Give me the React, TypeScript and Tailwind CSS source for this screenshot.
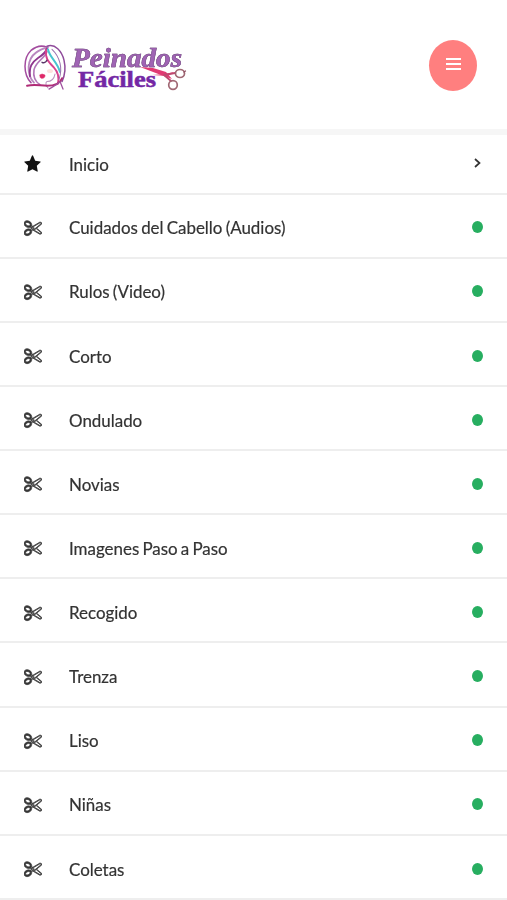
const CATEGORIES = [
  'Cuidados del Cabello (Audios)',
  'Rulos (Video)',
  'Corto',
  'Ondulado',
  'Novias',
  'Imagenes Paso a Paso',
  'Recogido',
  'Trenza',
  'Liso',
  'Niñas',
  'Coletas',
];

function Logo() {
  return (
    <svg width="164" height="50" viewBox="0 0 164 50" role="img" aria-label="Peinados Fáciles">
      {/* Face and hair */}
      <g fill="none" strokeLinecap="round" strokeLinejoin="round" transform="scale(1 1.07)">
        <path d="M7 37C-1 29-1 14 7 7 12 3 18 2 23 4" stroke="#a34c9f" strokeWidth="1.5" />
        <path d="M10 37C2 29 3 15 12 9c4-3 8-4 12-5" stroke="#b987bf" strokeWidth="1.8" />
        <path d="M6 31C5 22 8 18 14 14c5-3 8-5 9-9" stroke="#8f358e" strokeWidth="1.8" />
        <path d="M23 8C20 15 12 17 10 25c-1 6 1 11 6 14" stroke="#b276b8" strokeWidth="1.6" />
        <path d="M22 6c-1 9 3 12 8 17 5 5 5 10 4 15" stroke="#d8438f" strokeWidth="1.9" />
        <path d="M24 6c2 8 9 11 12 21" stroke="#48c4d0" strokeWidth="2" />
        <path d="M23 3c8-3 15 5 17 13 2 8 1 14-2 20" stroke="#8f4b9b" strokeWidth="1.5" />
        <path d="M28 6c8 7 11 18 7 28" stroke="#9a70ae" strokeWidth="1" />
        <path d="M31 29c-1 5-4 7-8 7-2 1-1 4 1 6" stroke="#b891bd" strokeWidth="1" />
        <path d="M3 40c8-2 13 0 20 0 8 0 13-2 15-7" stroke="#b02b76" strokeWidth="1.9" />
        <path d="M25 43c4-2 8-4 11-7M36 36l3 7" stroke="#a0509e" strokeWidth="1.3" />
        <path d="M18 18c2 1 4 0 5-2" stroke="#583467" strokeWidth="1.3" />
        <path d="M16 30l2-1 3 1c0 2-1 3-3 3s-2-1-2-3z" fill="#df2868" stroke="#df2868" strokeWidth=".6" />
      </g>
      <ellipse cx="26" cy="28" rx="3" ry="2" fill="#fce3df" />

      <text
        x="48"
        y="24"
        textLength="110"
        lengthAdjust="spacingAndGlyphs"
        strokeWidth=".5"
        className="fill-[#a064b4] stroke-[#8c599f] font-['Liberation_Serif',serif] text-[27px] font-bold italic drop-shadow-[0.7px_0.7px_0px_#655c69]"
      >
        Peinados
      </text>
      <text
        x="54"
        y="44"
        textLength="78"
        lengthAdjust="spacingAndGlyphs"
        strokeWidth=".5"
        className="fill-[#7427a5] stroke-[#7427a5] font-['Liberation_Serif',serif] text-[23px] font-bold"
      >
        Fáciles
      </text>

      {/* Scissors across the end of the name */}
      <g fill="none" strokeLinecap="round">
        <path d="M116 24l13 1 13 4 6 7-11-4z" fill="#e13a73" />
        <path d="M128 32l13-1 9-2-6 4z" fill="#e13a73" />
        <path d="M140 32l11-2M140 32l7 6" stroke="#c04870" strokeWidth="1.8" />
        <ellipse cx="156" cy="30.5" rx="4.5" ry="4" stroke="#a06874" strokeWidth="1.7" />
        <ellipse cx="149" cy="42" rx="4.3" ry="4.3" stroke="#a06874" strokeWidth="1.7" />
        <path d="M160 29l1.5-1" stroke="#8f4f62" strokeWidth="1.3" />
      </g>
    </svg>
  );
}

function StarIcon() {
  return (
    <svg viewBox="0 0 17 17" className="h-[17px] w-[17px] fill-[#111]">
      <path d="M8.5.3q.4 0 .6.5l2.1 4.900 5.1.7q.8.3.2.9l-3.700 3.500.9 5.300q0 .8-.8.5l-4.400-2.400-4.400 2.400q-.8.3-.8-.5l.9-5.300L.5 7.300q-.6-.6.2-.9l5.100-.7L7.900.8q.2-.5.6-.5z" />
    </svg>
  );
}

function ScissorsIcon() {
  return (
    <svg
      viewBox="0 0 1792 1792"
      preserveAspectRatio="none"
      strokeWidth="80"
      className="h-[19px] w-[18px] fill-[#333] stroke-[#444]"
    >
      <path d="M960 896q26 0 45 19t19 45-19 45-45 19-45-19-19-45 19-45 45-19zm300 64l507 398q28 20 25 56-5 35-35 51l-128 64q-13 7-29 7-17 0-31-8l-690-387-110 66q-8 4-12 5 14 49 10 97-7 77-56 147.5t-132 123.5q-132 84-277 84-136 0-222-78-90-84-79-207 7-76 56-147t131-124q132-84 278-84 83 0 151 31 9-13 22-22l122-73-122-73q-13-9-22-22-68 31-151 31-146 0-278-84-82-53-131-124t-56-147q-5-59 15.5-113t63.5-93q85-79 222-79 145 0 277 84 83 52 132 123t56 148q4 48-10 97 4 1 12 5l110 66 690-387q14-8 31-8 16 0 29 7l128 64q30 16 35 51 3 36-25 56zm-681-260q46-42 21-108t-106-117q-92-59-192-59-74 0-113 36-46 42-21 108t106 117q92 59 192 59 74 0 113-36zm-85 745q81-51 106-117t-21-108q-39-36-113-36-100 0-192 59-81 51-106 117t21 108q39 36 113 36 100 0 192-59zm178-613l96 58v-11q0-36 33-56l14-8-79-44-26 26q-3 3-10 11t-12 12q-2 2-4 3.5t-3 2.5zm224 224l96 32 736-576-128-64-768 431v113l-160 96 9 8q2 2 7 6 4 4 11 12t11 12l26 26zm704 416l128-64-520-408-177 138q-2 3-13 7z" />
    </svg>
  );
}

export default function App() {
  return (
    <div className="h-[900px] w-full overflow-hidden bg-white font-[Lato,sans-serif] text-[#333]">
      <header className="flex h-[135px] items-start justify-between border-b-[6px] border-[#f6f6f6] pl-6 pr-[30px]">
        <div className="pt-[43px]">
          <Logo />
        </div>
        <button
          aria-label="Menu"
          className="mt-[39.5px] flex h-[51px] w-12 items-center justify-center rounded-[50%] bg-[#ff7f7f]"
        >
          <span className="mb-0.5 flex w-[15px] flex-col gap-[3px]">
            <span className="h-0.5 bg-white" />
            <span className="h-0.5 bg-white" />
            <span className="h-0.5 bg-white" />
          </span>
        </button>
      </header>

      <nav>
        <a className="flex h-[59.5px] items-center border-b-2 border-[#eee] pl-6 pr-[26px]">
          <StarIcon />
          <span className="ml-[27.5px] pt-px text-[18px]">
            <span className="inline-block origin-left scale-x-[0.94] [-webkit-text-stroke:0.2px_#333]">Inicio</span>
          </span>
          <svg viewBox="0 0 7 10" className="ml-auto mb-px h-2.5 w-[7px]" fill="none">
            <path d="M1 1l4.5 4L1 9" stroke="#333" strokeWidth="1.7" />
          </svg>
        </a>
        {CATEGORIES.map((name) => (
          <a key={name} className="flex h-[64.13px] items-center border-b-2 border-[#eee] pt-[3.5px] pl-6 pr-6">
            <ScissorsIcon />
            <span className="ml-[26.5px] pt-px text-[18px]">
              <span className="inline-block origin-left scale-x-[0.94] [word-spacing:-1.2px] [-webkit-text-stroke:0.2px_#333]">
                {name}
              </span>
            </span>
            <span className="ml-auto h-3 w-[11px] rounded-[50%] bg-[#27ae60]" />
          </a>
        ))}
      </nav>
    </div>
  );
}
